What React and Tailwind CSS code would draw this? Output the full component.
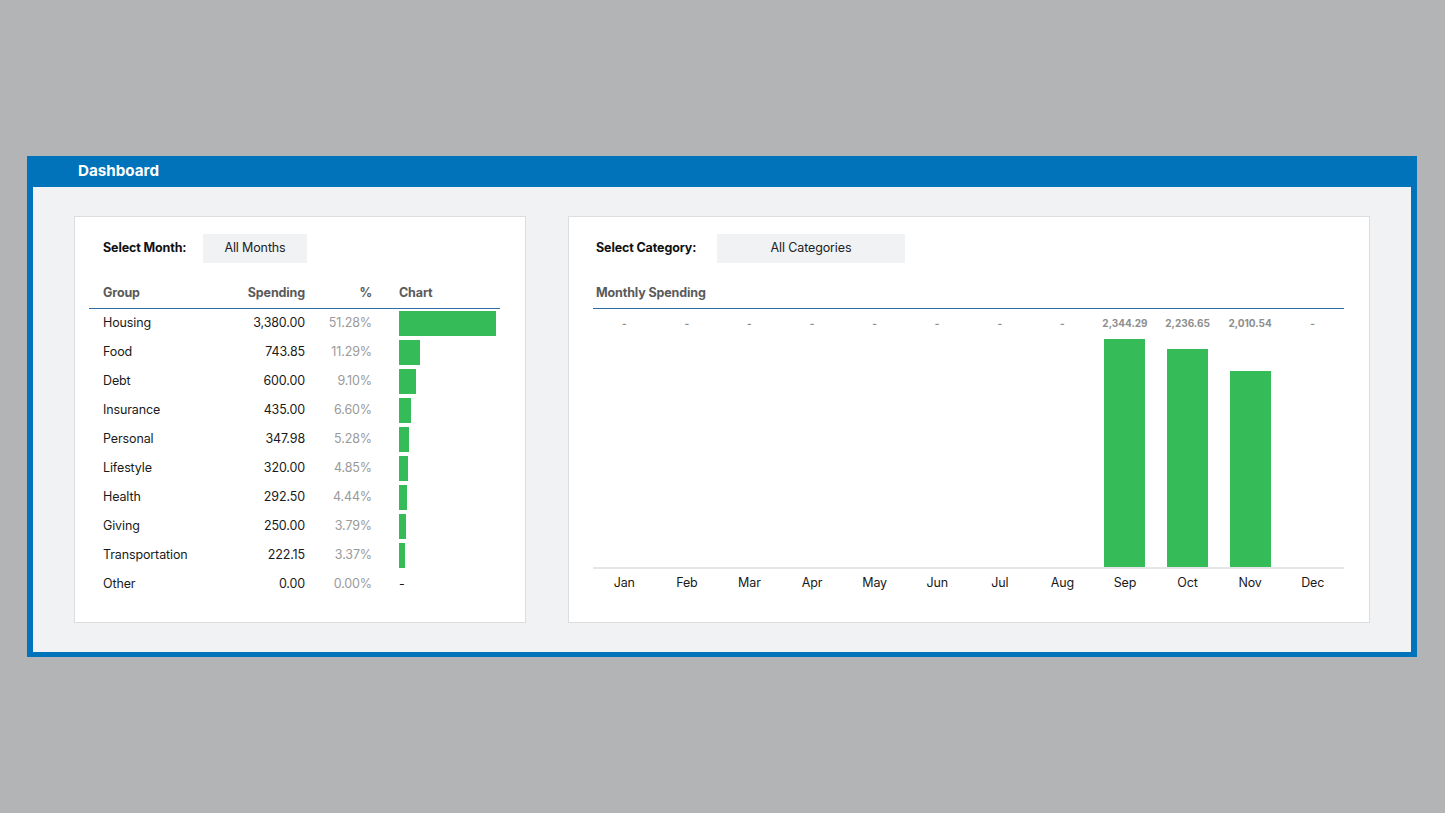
import React from 'react';

const groups = [
    {name:'Housing', amount:'3,380.00', pct:51.28},
    {name:'Food', amount:'743.85', pct:11.29},
    {name:'Debt', amount:'600.00', pct:9.10},
    {name:'Insurance', amount:'435.00', pct:6.60},
    {name:'Personal', amount:'347.98', pct:5.28},
    {name:'Lifestyle', amount:'320.00', pct:4.85},
    {name:'Health', amount:'292.50', pct:4.44},
    {name:'Giving', amount:'250.00', pct:3.79},
    {name:'Transportation', amount:'222.15', pct:3.37},
    {name:'Other', amount:'0.00', pct:0},
];

const months = [
    {m:'Jan', v:0},{m:'Feb', v:0},{m:'Mar', v:0},{m:'Apr', v:0},
    {m:'May', v:0},{m:'Jun', v:0},{m:'Jul', v:0},{m:'Aug', v:0},
    {m:'Sep', v:2344.29},{m:'Oct', v:2236.65},{m:'Nov', v:2010.54},{m:'Dec', v:0},
];

const fmt = (n) => n.toLocaleString('en-US',{minimumFractionDigits:2, maximumFractionDigits:2});

const GroupTable = () => {
    const maxPct = Math.max(...groups.map(g=>g.pct));
    return(
        <div className="bg-white border border-[#dcdddf] w-[452px] h-[407px] pl-[14px] pr-[25px] pt-[17px]">
            <div className="flex items-center pl-[14px]">
                <span className="w-[100px] font-bold text-[12.5px] tracking-[-0.01em] text-[#111]">Select Month:</span>
                <div className="w-[104px] h-[29px] bg-[#f1f2f4] flex items-center justify-center text-[12.5px] tracking-[-0.01em] text-[#222]">All Months</div>
            </div>
            <div className="mt-[16px]">
                <div className="flex items-center h-[30px] border-b border-[#2b6ea8] pl-[14px] pr-[4px] font-bold text-[12.5px] tracking-[-0.01em] text-[#5a5a5a]">
                    <span className="w-[120px]">Group</span>
                    <span className="w-[82px] text-right">Spending</span>
                    <span className="w-[67px] text-right">%</span>
                    <span className="ml-[27px] flex-1">Chart</span>
                </div>
                {groups.map(g=>(
                    <div key={g.name} className="flex items-center h-[29px] pl-[14px] pr-[4px] text-[12.5px] tracking-[-0.01em]">
                        <span className="w-[120px] text-[#1a1a1a]">{g.name}</span>
                        <span className="w-[82px] text-right text-[#1a1a1a]">{g.amount}</span>
                        <span className="w-[67px] text-right text-[#9a9a9a]">{g.pct.toFixed(2)}%</span>
                        <div className="ml-[27px] flex-1 flex items-center">
                            {g.pct > 0
                                ? <div className="h-[25px] bg-[#35bc59]" style={{width: `${Math.round(g.pct/maxPct*97)}px`}} />
                                : <span className="text-[#1a1a1a]">-</span>}
                        </div>
                    </div>
                ))}
            </div>
        </div>
    )
}

const MonthlyChart = () => {
    const max = Math.max(...months.map(x=>x.v));
    return(
        <div className="bg-white border border-[#dcdddf] w-[802px] h-[407px] pl-[24px] pr-[25px] pt-[17px]">
            <div className="flex items-center pl-[3px]">
                <span className="w-[121px] font-bold text-[12.5px] tracking-[-0.01em] text-[#111]">Select Category:</span>
                <div className="w-[188px] h-[29px] bg-[#f1f2f4] flex items-center justify-center text-[12.5px] tracking-[-0.01em] text-[#222]">All Categories</div>
            </div>
            <div className="mt-[16px]">
                <div className="flex items-center h-[30px] border-b border-[#2b6ea8] pl-[3px] font-bold text-[12.5px] tracking-[-0.01em] text-[#5a5a5a]">
                    Monthly Spending
                </div>
                <div className="grid grid-cols-12 pt-[7px] border-b-2 border-[#e4e5e7]">
                    {months.map(x=>(
                        <div key={x.m} className="flex flex-col items-center">
                            <span className="h-[15px] leading-[15px] text-[10px] font-bold text-[#8e8e8e]">{x.v ? fmt(x.v) : '-'}</span>
                            <div className="h-[236px] w-full flex items-end justify-center">
                                {x.v > 0 && <div className="w-[41px] bg-[#35bc59]" style={{height: `${Math.round(x.v/max*228)}px`}} />}
                            </div>
                        </div>
                    ))}
                </div>
                <div className="grid grid-cols-12">
                    {months.map(x=>(
                        <div key={x.m} className="h-[29px] flex items-center justify-center text-[12.5px] tracking-[-0.01em] text-[#1a1a1a]">{x.m}</div>
                    ))}
                </div>
            </div>
        </div>
    )
}

export default function App(){
    return(
        <div className="min-h-[813px] bg-[#b3b4b6] pt-[156px] pl-[27px]" style={{fontFamily:'Inter, "Noto Sans", sans-serif'}}>
            <div className="w-[1390px] h-[501px] bg-[#0073bb] flex flex-col px-[6px] pb-[5px]">
                <div className="h-[31px] flex items-center pl-[45px] text-white font-bold text-[15.2px]">Dashboard</div>
                <div className="flex-1 bg-[#f1f2f4] flex gap-[42px] pl-[41px] pt-[29px]">
                    <GroupTable />
                    <MonthlyChart />
                </div>
            </div>
        </div>
    )
}
